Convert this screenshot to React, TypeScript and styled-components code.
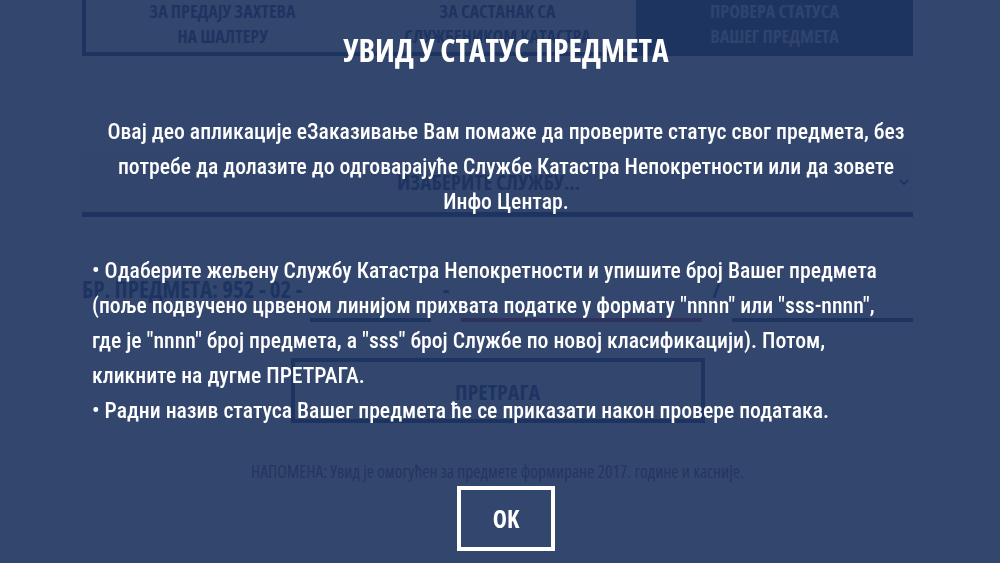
import React from 'react'
import styled, { createGlobalStyle } from 'styled-components'

const navy = '#002e68'

const GlobalStyle = createGlobalStyle`
  html, body {
    margin: 0;
    background: #fff;
    font-family: "Open Sans", "Noto Sans", sans-serif;
    overflow: hidden;
  }
  * { box-sizing: border-box; }
`

const Page = styled.div`
  width: 831px;
  margin: -16px 0 0 82px;
  display: flex;
  flex-direction: column;
  color: ${navy};
  font-family: "Open Sans", sans-serif;
  font-stretch: 75%;
  font-weight: 700;
`

const TabRow = styled.div`
  display: grid;
  grid-template-columns: repeat(3, 1fr);
  border-bottom: 4px solid ${navy};
`

const Tab = styled.div<{ $active?: boolean; $first?: boolean }>`
  padding: 15px 10px 3px;
  text-align: center;
  font-size: 18px;
  line-height: 25px;
  color: ${p => (p.$active ? '#d8dde8' : navy)};
  background: ${p => (p.$active ? navy : 'transparent')};
  border-left: ${p => (p.$first ? `4px solid ${navy}` : 'none')};
`

const SelectBox = styled.div`
  margin-top: 95px;
  height: 66px;
  padding-right: 4px;
  display: grid;
  grid-template-columns: 1fr 10px;
  gap: 4px;
  align-items: center;
  background: #f2f2f2;
  border-bottom: 5px solid ${navy};
  font-size: 21px;
  text-align: center;
`

const NumberRow = styled.div`
  margin-top: 39px;
  height: 66px;
  display: grid;
  grid-template-columns: 228px 121px 30px 241px 30px 1fr;
  align-items: stretch;
  font-size: 23px;
`

const RowLabel = styled.span`
  align-self: center;
  white-space: nowrap;
`

const Field = styled.div<{ $red?: boolean }>`
  background: #f7f7f7;
  border-bottom: 4px solid ${p => (p.$red ? '#c8102e' : navy)};
`

const Sep = styled.span`
  align-self: center;
  text-align: center;
`

const SearchButton = styled.button`
  margin: 36px auto 0;
  width: 414px;
  height: 65px;
  border: 4px solid ${navy};
  background: transparent;
  color: ${navy};
  font-family: inherit;
  font-stretch: 75%;
  font-weight: 700;
  font-size: 22px;
`

const Note = styled.p`
  margin: 36px 0 0;
  text-align: center;
  font-size: 17.5px;
  line-height: 24px;
  font-weight: 400;
  color: #444;
`

const Overlay = styled.div`
  position: fixed;
  inset: 0;
  z-index: 10;
  padding-left: 92px;
  background: rgba(32, 53, 96, 0.914);
`

const Dialog = styled.div`
  width: 828px;
  padding-top: 30px;
  display: flex;
  flex-direction: column;
  align-items: center;
  color: #fff;
`

const Title = styled.h2`
  margin: 0;
  font-family: "Open Sans", sans-serif;
  font-stretch: 75%;
  font-weight: 700;
  font-size: 31.5px;
  line-height: 40px;
`

const Text = styled.p<{ $align: 'center' | 'left'; $gap: number }>`
  align-self: stretch;
  margin: ${p => p.$gap}px 0 0;
  font-family: Roboto, "Noto Sans", sans-serif;
  font-stretch: condensed;
  font-weight: 500;
  font-size: 21.7px;
  line-height: 35px;
  text-align: ${p => p.$align};
  white-space: nowrap;
`

const OkButton = styled.button`
  margin-top: 58px;
  width: 98px;
  height: 65px;
  border: 4px solid #fff;
  background: transparent;
  color: #fff;
  font-family: "Open Sans", sans-serif;
  font-stretch: 75%;
  font-weight: 700;
  font-size: 24px;
  cursor: pointer;
`

const Chevron = () => (
  <svg width="10" height="6" viewBox="0 0 10 6" fill="none">
    <polyline points="1,1 5,5 9,1" stroke={navy} strokeWidth="2" />
  </svg>
)

export default function App() {
  return (
    <>
      <GlobalStyle />
      <Page lang="sr">
        <TabRow>
          <Tab $first>ЗА ПРЕДАЈУ ЗАХТЕВА<br />НА ШАЛТЕРУ</Tab>
          <Tab>ЗА САСТАНАК СА<br />СЛУЖБЕНИКОМ КАТАСТРА</Tab>
          <Tab $active>ПРОВЕРА СТАТУСА<br />ВАШЕГ ПРЕДМЕТА</Tab>
        </TabRow>
        <SelectBox>
          <span>ИЗАБЕРИТЕ СЛУЖБУ...</span>
          <Chevron />
        </SelectBox>
        <NumberRow>
          <RowLabel>БР. ПРЕДМЕТА: 952 - 02 -</RowLabel>
          <Field />
          <Sep>-</Sep>
          <Field $red />
          <Sep>/</Sep>
          <Field />
        </NumberRow>
        <SearchButton>ПРЕТРАГА</SearchButton>
        <Note>НАПОМЕНА: Увид је омогућен за предмете формиране 2017. године и касније.</Note>
      </Page>
      <Overlay lang="sr">
        <Dialog>
          <Title>УВИД У СТАТУС ПРЕДМЕТА</Title>
          <Text $align="center" $gap={43.5}>
            Овај део апликације еЗаказивање Вам помаже да проверите статус свог предмета, без<br />
            потребе да долазите до одговарајуће Службе Катастра Непокретности или да зовете<br />
            Инфо Центар.
          </Text>
          <Text $align="left" $gap={34.4}>
            • Одаберите жељену Службу Катастра Непокретности и упишите број Вашег предмета<br />
            (поље подвучено црвеном линијом прихвата податке у формату "nnnn" или "sss-nnnn",<br />
            где је "nnnn" број предмета, а "sss" број Службе по новој класификацији). Потом,<br />
            кликните на дугме ПРЕТРАГА.<br />
            • Радни назив статуса Вашег предмета ће се приказати након провере података.
          </Text>
          <OkButton>OK</OkButton>
        </Dialog>
      </Overlay>
    </>
  )
}
